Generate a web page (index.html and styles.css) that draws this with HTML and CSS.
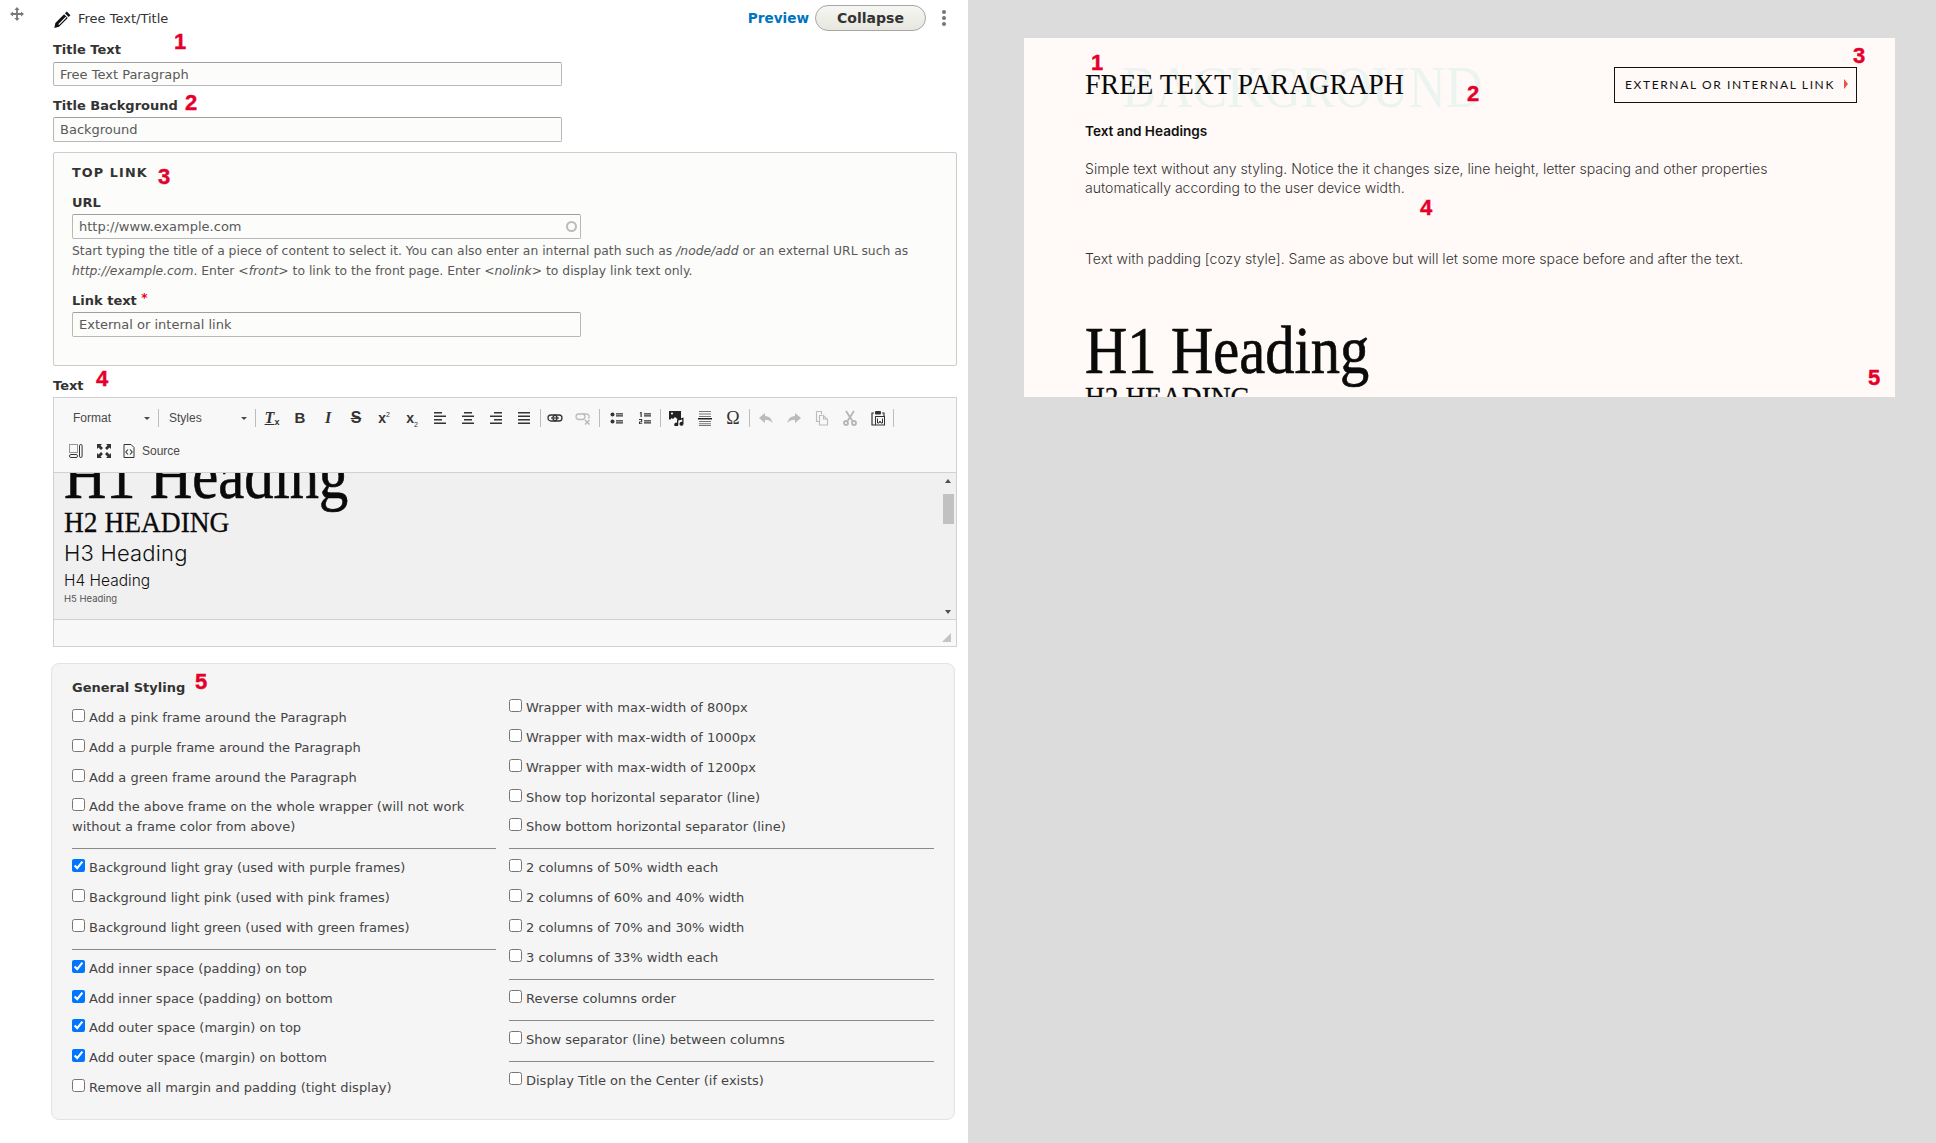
FILE: index.html
```html
<!DOCTYPE html>
<html lang="en">
<head>
<meta charset="utf-8">
<title>Free Text/Title</title>
<link rel="stylesheet" href="styles.css">
</head>
<body>
<main class="form-pane">
  <header class="para-head">
    <svg class="drag" viewBox="0 0 14 14"><path d="M7 0l2.600 3H7.900v3.100H11V4.400L14 7l-3 2.600V7.900H7.900V11h1.700L7 14l-2.600-3h1.700V7.900H3v1.700L0 7l3-2.600v1.700h3.100V3H4.400z" fill="#787878"/></svg>
    <svg class="pencil" viewBox="0 0 16 16"><path d="M12 .5l3.500 3.500-1.700 1.700-3.500-3.500zM9.500 3l3.500 3.500-8.300 8.300L.3 15.900l1-4.500zM2.900 11.300l1.900 1.900 7-7-.8-.8-7 7z" fill="#111"/></svg>
    <span class="para-title">Free Text/Title</span>
    <a class="preview-link">Preview</a>
    <button class="collapse-btn">Collapse</button>
    <span class="kebab"><i></i><i></i><i></i></span>
  </header>

  <div class="field">
    <label class="lbl lbl-first">Title Text</label>
    <div class="input input-short">Free Text Paragraph</div>
  </div>
  <div class="field field-next">
    <label class="lbl lbl-tight">Title Background</label>
    <div class="input">Background</div>
  </div>

  <section class="fieldset">
    <div class="legend">TOP LINK</div>
    <label class="lbl lbl-url">URL</label>
    <div class="input input-in">http://www.example.com<span class="throbber"></span></div>
    <p class="desc">Start typing the title of a piece of content to select it. You can also enter an internal path such as <em>/node/add</em> or an external URL such as <em>http://example.com</em>. Enter <em>&lt;front&gt;</em> to link to the front page. Enter <em>&lt;nolink&gt;</em> to display link text only.</p>
    <label class="lbl lbl-link">Link text <span class="req">*</span></label>
    <div class="input input-in">External or internal link</div>
  </section>

  <label class="lbl lbl-text">Text</label>
  <div class="editor">
    <div class="toolbar">
      <div class="tool-row">
        <div class="combo combo-format">Format<i class="caret"></i></div><span class="sep sep-a"></span>
        <div class="combo combo-styles">Styles<i class="caret"></i></div><span class="sep sep-e"></span>
        <span class="btn"><span class="g g-tx">T<small>x</small></span></span>
        <span class="btn"><span class="g g-b">B</span></span>
        <span class="btn"><span class="g g-i">I</span></span>
        <span class="btn"><span class="g g-s">S</span></span>
        <span class="btn"><span class="g g-sup">x<sup>2</sup></span></span>
        <span class="btn"><span class="g g-sub">x<sub>2</sub></span></span>
        <span class="btn"><svg class="ico" viewBox="0 0 16 16"><path d="M2 2h8v1.500H2zM2 5.500h12V7H2zM2 9h8v1.500H2zM2 12.500h12V14H2z" fill="#333"/></svg></span>
        <span class="btn"><svg class="ico" viewBox="0 0 16 16"><path d="M4 2h8v1.500H4zM2 5.500h12V7H2zM4 9h8v1.500H4zM2 12.500h12V14H2z" fill="#333"/></svg></span>
        <span class="btn"><svg class="ico" viewBox="0 0 16 16"><path d="M6 2h8v1.500H6zM2 5.500h12V7H2zM6 9h8v1.500H6zM2 12.500h12V14H2z" fill="#333"/></svg></span>
        <span class="btn"><svg class="ico" viewBox="0 0 16 16"><path d="M2 2h12v1.500H2zM2 5.500h12V7H2zM2 9h12v1.500H2zM2 12.500h12V14H2z" fill="#333"/></svg></span>
        <span class="sep sep-a"></span>
        <span class="btn"><svg class="ico" viewBox="0 0 16 16"><g fill="none" stroke="#333" stroke-width="1.300"><rect x="1" y="5" width="9" height="6" rx="3"/><rect x="6" y="5" width="9" height="6" rx="3"/></g><path d="M4 7.400h8v1.200H4z" fill="#333"/></svg></span>
        <span class="btn off"><svg class="ico" viewBox="0 0 16 16"><g fill="none" stroke="#333" stroke-width="1.300"><rect x="1" y="4" width="9" height="5.500" rx="2.700"/><path d="M8 4h3.500a2.700 2.700 0 0 1 2 4.500"/><path d="M10 10l4.500 4.500M14.500 10L10 14.500" stroke-width="1.600"/></g></svg></span>
        <span class="sep sep-b"></span>
        <span class="btn"><svg class="ico" viewBox="0 0 16 16"><circle cx="3.500" cy="4.500" r="2" fill="#333"/><circle cx="3.500" cy="11.500" r="2" fill="#333"/><path d="M7 3.300h7v1.100H7zM7 5.300h7v1.100H7zM7 10.300h7v1.100H7zM7 12.300h7v1.100H7z" fill="#333"/></svg></span>
        <span class="btn"><svg class="ico" viewBox="0 0 16 16"><path d="M3.500 2h1.200v5H3.500V3.200L2.500 3.500zM2 9h3.200v3.200H3.100v1H5.200V14H2v-2.600h2.100v-1.500H2zM7 3.300h7v1.100H7zM7 5.300h7v1.100H7zM7 10.300h7v1.100H7zM7 12.300h7v1.100H7z" fill="#333"/></svg></span>
        <span class="sep sep-c"></span>
        <span class="btn"><svg class="ico" viewBox="0 0 16 16"><path d="M0 1h12v9H9.500L6 7 4 9 2.500 8 1.500 9.500H0z" fill="#222"/><circle cx="3" cy="3.500" r="1.100" fill="#f8f8f8"/><path d="M8 9.500l6.500-2v6.300a2 2 0 1 1-1.300-1.900V9.400L9.300 10.600v4a2 2 0 1 1-1.300-1.900z" fill="#222"/></svg></span>
        <span class="btn"><svg class="ico" viewBox="0 0 16 16"><path d="M2 1h12v1H2zM2 3.500h12v1H2zM2 6h12v1H2z" fill="#777"/><path d="M1 8h14v1.500H1z" fill="#222"/><path d="M2 11h12v1H2zM2 13.200h12v1H2zM2 15h12v1H2z" fill="#777"/></svg></span>
        <span class="btn"><span class="g g-omega">Ω</span></span>
        <span class="sep sep-f"></span>
        <span class="btn off"><svg class="ico" viewBox="0 0 16 16"><path d="M7 3L1 8l6 5V9.800c3.300 0 5.500.8 7.500 3.200C13.800 9 11.500 6.300 7 6z" fill="#333"/></svg></span>
        <span class="btn off"><svg class="ico" viewBox="0 0 16 16"><path d="M9 3l6 5-6 5V9.800c-3.300 0-5.500.8-7.500 3.200C2.200 9 4.500 6.300 9 6z" fill="#333"/></svg></span>
        <span class="btn off"><svg class="ico" viewBox="0 0 16 16"><path d="M2.500 1.500h5v3M2.500 1.500v10h3M8.500 5.500h-3v9.500h8V9.500l-4-4v3.500h4" fill="none" stroke="#333" stroke-width="1.100"/></svg></span>
        <span class="btn off"><svg class="ico" viewBox="0 0 16 16"><g fill="none" stroke="#222" stroke-width="1.800"><path d="M4 1l6.500 10M12 1L5.500 11"/><circle cx="4" cy="13" r="2"/><circle cx="12" cy="13" r="2"/></g></svg></span>
        <span class="btn"><svg class="ico" viewBox="0 0 16 16"><path d="M4 3H2v12h3M12 3h2v3" fill="none" stroke="#333" stroke-width="1.200"/><rect x="5" y="1" width="6" height="3.500" rx="1" fill="#333"/><rect x="5.500" y="6.500" width="9" height="8.500" fill="#f8f8f8" stroke="#333"/><path d="M7.500 8.500v4.500h1.500l1-2 1 2h1.500V8.500" fill="none" stroke="#333"/></svg></span>
        <span class="sep sep-d"></span>
      </div>
      <div class="tool-row tool-row-2">
        <span class="btn"><svg class="ico" viewBox="0 0 16 16"><path d="M1.500 1.500h8v8h-8z" fill="none" stroke="#333" stroke-dasharray="1 1"/><rect x="1.500" y="11.500" width="8" height="3" rx="1.400" fill="none" stroke="#333"/><rect x="11.500" y="1.500" width="2.600" height="13" rx="1.300" fill="none" stroke="#333"/></svg></span>
        <span class="btn"><svg class="ico" viewBox="0 0 16 16"><path d="M1 1h5L4.500 2.500 7 5 5 7 2.500 4.500 1 6zM15 1v5l-1.500-1.500L11 7 9 5l2.500-2.500L10 1zM1 15v-5l1.500 1.500L5 9l2 2-2.500 2.500L6 15zM15 15h-5l1.500-1.500L9 11l2-2 2.500 2.500L15 10z" fill="#333"/></svg></span>
        <span class="btn btn-src"><svg class="ico" viewBox="0 0 16 16"><path d="M3 1.500h7l3 3v10H3z" fill="none" stroke="#333"/><path d="M7 6.500L4.800 9 7 11.500M9 6.500L11.200 9 9 11.500" fill="none" stroke="#333" stroke-width="1.100"/></svg></span>
        <span class="src-label">Source</span>
      </div>
    </div>
    <div class="edit-area">
      <div class="edit-body">
        <h1 class="h1 h1-scrolled">H1 Heading</h1>
        <h2 class="h2">H2 HEADING</h2>
        <h3 class="h3">H3 Heading</h3>
        <h4 class="h4">H4 Heading</h4>
        <h5 class="h5">H5 Heading</h5>
      </div>
      <div class="scroll">
        <i class="arrow-up"></i>
        <i class="thumb"></i>
        <i class="arrow-down"></i>
      </div>
    </div>
    <div class="edit-foot"><i class="grip"></i></div>
  </div>

  <section class="panel">
    <div class="col">
      <div class="panel-title">General Styling</div>
      <label class="opt"><input type="checkbox">Add a pink frame around the Paragraph</label>
      <label class="opt"><input type="checkbox">Add a purple frame around the Paragraph</label>
      <label class="opt opt-t"><input type="checkbox">Add a green frame around the Paragraph</label>
      <label class="opt"><input type="checkbox">Add the above frame on the whole wrapper (will not work without a frame color from above)</label>
      <hr class="rule">
      <label class="opt"><input type="checkbox" checked>Background light gray (used with purple frames)</label>
      <label class="opt"><input type="checkbox">Background light pink (used with pink frames)</label>
      <label class="opt"><input type="checkbox">Background light green (used with green frames)</label>
      <hr class="rule">
      <label class="opt"><input type="checkbox" checked>Add inner space (padding) on top</label>
      <label class="opt opt-t"><input type="checkbox" checked>Add inner space (padding) on bottom</label>
      <label class="opt"><input type="checkbox" checked>Add outer space (margin) on top</label>
      <label class="opt"><input type="checkbox" checked>Add outer space (margin) on bottom</label>
      <label class="opt"><input type="checkbox">Remove all margin and padding (tight display)</label>
    </div>
    <div class="col col-right">
      <label class="opt"><input type="checkbox">Wrapper with max-width of 800px</label>
      <label class="opt"><input type="checkbox">Wrapper with max-width of 1000px</label>
      <label class="opt"><input type="checkbox">Wrapper with max-width of 1200px</label>
      <label class="opt opt-t"><input type="checkbox">Show top horizontal separator (line)</label>
      <label class="opt"><input type="checkbox">Show bottom horizontal separator (line)</label>
      <hr class="rule">
      <label class="opt"><input type="checkbox">2 columns of 50% width each</label>
      <label class="opt"><input type="checkbox">2 columns of 60% and 40% width</label>
      <label class="opt"><input type="checkbox">2 columns of 70% and 30% width</label>
      <label class="opt"><input type="checkbox">3 columns of 33% width each</label>
      <hr class="rule">
      <label class="opt"><input type="checkbox">Reverse columns order</label>
      <hr class="rule">
      <label class="opt"><input type="checkbox">Show separator (line) between columns</label>
      <hr class="rule">
      <label class="opt"><input type="checkbox">Display Title on the Center (if exists)</label>
    </div>
  </section>
</main>

<aside class="preview-pane">
  <article class="canvas">
    <div class="canvas-head">
      <div class="title-wrap">
        <span class="watermark">BACKGROUND</span>
        <span class="big-title">FREE TEXT PARAGRAPH</span>
      </div>
      <a class="top-link">EXTERNAL OR INTERNAL LINK<i class="tri"></i></a>
    </div>
    <p class="lead">Text and Headings</p>
    <p class="body-text">Simple text without any styling. Notice the it changes size, line height, letter spacing and other properties automatically according to the user device width.</p>
    <p class="body-text cozy">Text with padding [cozy style]. Same as above but will let some more space before and after the text.</p>
    <h1 class="h1 h1-preview">H1 Heading</h1>
    <h2 class="h2">H2 HEADING</h2>
  </article>
</aside>

<span class="num n1">1</span>
<span class="num n2">2</span>
<span class="num n3">3</span>
<span class="num n4">4</span>
<span class="num n5">5</span>
<span class="num p1">1</span>
<span class="num p2">2</span>
<span class="num p3">3</span>
<span class="num p4">4</span>
<span class="num p5">5</span>
</body>
</html>
```
FILE: styles.css
```css
* { box-sizing: border-box; }
html, body { margin: 0; height: 100%; }
body {
  display: flex;
  height: 1143px;
  overflow: hidden;
  position: relative;
  background: #fff;
  font-family: "DejaVu Sans", sans-serif;
  font-size: 13px;
  color: #333;
}

/* left form */
.form-pane { width: 968px; flex: none; padding: 0 11px 0 53px; }
.para-head { display: flex; align-items: center; height: 36px; margin-left: -43px; margin-right: 11px; }
.drag { width: 14px; height: 14px; margin-top: -8px; flex: none; }
.pencil { width: 17px; height: 17px; margin-left: 30px; margin-top: 2px; flex: none; }
.para-title { margin-left: 7px; font-size: 13px; color: #333; }
.preview-link { margin-left: auto; font-size: 13.600px; font-weight: 700; color: #0074bd; }
.collapse-btn {
  width: 111px; height: 26px; margin-left: 6px; padding: 0;
  border: 1px solid #a6a6a6; border-radius: 13px;
  background: linear-gradient(#f6f6f3, #e7e7df);
  font: 700 14px "DejaVu Sans", sans-serif; color: #333;
}
.kebab { display: flex; flex-direction: column; gap: 2px; margin-left: 16px; }
.kebab i { width: 4px; height: 4px; border-radius: 50%; background: #757575; }

.field { margin-top: 5px; }
.field-next { margin-top: 11px; }
.lbl { display: block; height: 18px; line-height: 18px; font-weight: 700; font-size: 13px; color: #333; }
.lbl-first { margin-bottom: 3px; }
.lbl-tight { margin-bottom: 2px; }
.input {
  position: relative;
  width: 509px; height: 25px; padding: 0 6px;
  line-height: 23px; font-size: 13px; color: #595959;
  background: #fcfcfa;
  border: 1px solid #b8b8b8; border-top-color: #a0a0a0; border-radius: 2px;
}
.input-short { height: 24px; line-height: 23px; }
.fieldset {
  margin-top: 10px; height: 214px; padding: 11px 18px 0;
  background: #fcfcfa;
  border: 1px solid #ccc; border-radius: 2px;
}
.legend { height: 18px; line-height: 18px; font-weight: 700; font-size: 12.800px; letter-spacing: 1.100px; color: #333; }
.lbl-url { margin-top: 12px; margin-bottom: 2px; }
.throbber { position: absolute; right: 3px; top: 6px; width: 11px; height: 11px; border: 2px solid #bbb; border-radius: 50%; }
.desc { margin: 2px 0 0; font-size: 12.350px; line-height: 20px; color: #595959; }
.desc em { font-style: italic; }
.lbl-link { margin-top: 8px; margin-bottom: 5px; }
.req { color: #e4002b; vertical-align: 3px; font-size: 12px; }
.lbl-text { margin-top: 11px; margin-bottom: 2px; }

/* editor */
.editor { border: 1px solid #d1d1d1; height: 250px; display: flex; flex-direction: column; }
.toolbar { height: 75px; flex: none; background: #f8f8f8; border-bottom: 1px solid #d1d1d1; padding: 7px 0 0 6px; }
.tool-row { display: flex; align-items: center; height: 26px; }
.tool-row-2 { margin-top: 7px; padding-left: 2px; }
.combo { position: relative; height: 20px; font: 12px/20px "Liberation Sans", sans-serif; color: #484848; flex: none; }
.combo-format { width: 98px; padding-left: 13px; }
.combo-styles { width: 96px; padding-left: 10px; }
.caret { position: absolute; right: 8px; top: 9px; border: 3px solid transparent; border-top: 3px solid #484848; border-bottom: 0; }
.sep { width: 1px; height: 18px; flex: none; background: #bcbcbc; margin: 0 2px; }
.sep-a { margin: 0 0 0 2px; }
.sep-b { margin: 0 3px 0 2px; }
.sep-c { margin: 0 2px 0 1px; }
.sep-d { margin: 0 0 0 1px; }
.sep-e { margin: 0 2px 0 0; }
.sep-f { margin: 0 2px; }
.combo-format + .sep-a { margin-left: 0; }
.btn { width: 28px; height: 20px; flex: none; display: flex; align-items: center; justify-content: center; }
.btn.off { opacity: .3; }
.btn-src { width: 22px; }
.ico { width: 16px; height: 16px; display: block; }
.src-label { font: 12px "Liberation Sans", sans-serif; color: #484848; margin-left: 2px; }
.g { color: #333; line-height: 16px; font-family: "Liberation Sans", sans-serif; font-weight: 700; font-size: 15px; }
.g-tx { font-family: "Liberation Serif", serif; font-style: italic; text-decoration: underline; font-size: 16px; }
.g-tx small { font: 700 9px "Liberation Sans", sans-serif; text-decoration: none; display: inline-block; vertical-align: -2px; }
.g-i { font-family: "Liberation Serif", serif; font-style: italic; font-size: 16px; }
.g-s { text-decoration: line-through; font-size: 16px; }
.g-sup, .g-sub { font-size: 14px; }
.g-sup sup, .g-sub sub { font-size: 7px; font-weight: 400; line-height: 0; }
.g-omega { font-family: "Liberation Serif", serif; font-weight: 400; font-size: 18px; }

.edit-area { flex: none; height: 147px; display: flex; background: #f0f0f0; overflow: hidden; border-bottom: 1px solid #d1d1d1; }
.edit-body { flex: 1; padding-left: 10px; overflow: hidden; }
.h1, .h2 { display: block; margin: 0; font-family: "Liberation Serif", serif; font-weight: 400; color: #0a0a0a; transform-origin: left top; white-space: nowrap; }
.h1 { font-size: 68px; line-height: 68px; transform: scaleX(.86); -webkit-text-stroke: .7px #0a0a0a; }
.h1-scrolled { margin-top: -32px; }
.h2 { font-size: 30px; line-height: 30px; transform: scaleX(.915); margin-top: -2px; -webkit-text-stroke: .3px #0a0a0a; }
.h3 { margin: 2px 0 0; font: 300 22px/28px Inter, sans-serif; color: #111; letter-spacing: .2px; }
.h4 { margin: 3px 0 0; font: 300 15.500px/22px Inter, sans-serif; color: #111; }
.h5 { margin: 0; font: 400 9.500px/14px Inter, sans-serif; color: #555; }
.scroll { width: 15px; flex: none; display: flex; flex-direction: column; align-items: center; padding: 6px 1px 5px 0; }
.scroll i { display: block; }
.arrow-up { border: 3.500px solid transparent; border-bottom: 4px solid #505050; border-top: 0; }
.arrow-down { border: 3.500px solid transparent; border-top: 4px solid #505050; border-bottom: 0; margin-top: auto; }
.thumb { width: 11px; height: 30px; background: #c1c1c1; margin-top: 11px; }
.edit-foot { flex: 1; background: #f8f8f8; position: relative; }
.grip { position: absolute; right: 5px; bottom: 4px; border-left: 9px solid transparent; border-bottom: 9px solid #c4c4c4; }

/* styling panel */
.panel {
  display: grid; grid-template-columns: 424px 425px; column-gap: 13px;
  width: 904px; height: 457px; margin: 16px 0 0 -2px; padding: 14px 20px 0;
  background: #f5f5f5; border: 1px solid #e3e3e3; border-radius: 8px;
}
.col { display: flex; flex-direction: column; }
.col-right { padding-top: 20px; }
.panel-title { height: 20px; line-height: 20px; font-weight: 700; color: #333; margin-bottom: 10px; }
.opt { display: block; line-height: 20px; margin-bottom: 10px; color: #444; }
.opt-t { margin-bottom: 9px; }
.opt input { width: 13px; height: 13px; margin: 0 4px 0 0; }
.rule { width: 100%; height: 1px; margin: 1px 0 9px; border: 0; background: #8a8a8a; flex: none; }

/* right preview */
.preview-pane { flex: 1; background: #dcdcdc; padding: 38px 41px 0 56px; }
.canvas { height: 359px; overflow: hidden; background: #fffaf7; padding: 29px 39px 0 61px; }
.canvas-head { display: flex; justify-content: space-between; align-items: center; height: 36px; }
.title-wrap { position: relative; }
.big-title { position: relative; display: block; margin-top: -2px; font: 400 30px/36px "Liberation Serif", serif; color: #0a0a0a; transform: scaleX(.93); transform-origin: left top; white-space: nowrap; }
.watermark { position: absolute; left: 37px; top: -10px; font: 400 59px/59px "Liberation Serif", serif; color: #ecf4f1; transform: scaleX(.866); transform-origin: left top; white-space: nowrap; }
.top-link {
  display: flex; align-items: center; width: 243px; height: 36px; margin-right: -1px; padding: 0 0 2px 10px;
  border: 1.500px solid #111;
  font: 400 12px Lato, sans-serif; letter-spacing: 1.620px; color: #111; white-space: nowrap;
}
.tri { margin-left: 9px; border-left: 4px solid #e8553e; border-top: 5px solid transparent; border-bottom: 5px solid transparent; }
.lead { margin: 16px 0 0; font: 600 13.600px/24px Inter, sans-serif; color: #111; }
.body-text { margin: 16px 0 0; max-width: 740px; font: 300 14.050px/19px Inter, sans-serif; color: #333; }
.cozy { margin-top: 52px; }
.h1-preview { margin-top: 48px; }

/* annotations */
.num { position: absolute; width: 16px; text-align: center; font: 700 22px/24px "Liberation Sans", sans-serif; color: #e4002b; -webkit-text-stroke: .4px #e4002b; }
.n1 { left: 172px; top: 30px; }
.n2 { left: 183px; top: 91px; }
.n3 { left: 156px; top: 165px; }
.n4 { left: 94px; top: 367px; }
.n5 { left: 193px; top: 670px; }
.p1 { left: 1089px; top: 51px; }
.p2 { left: 1465px; top: 82px; }
.p3 { left: 1851px; top: 44px; }
.p4 { left: 1418px; top: 196px; }
.p5 { left: 1866px; top: 366px; }
```
